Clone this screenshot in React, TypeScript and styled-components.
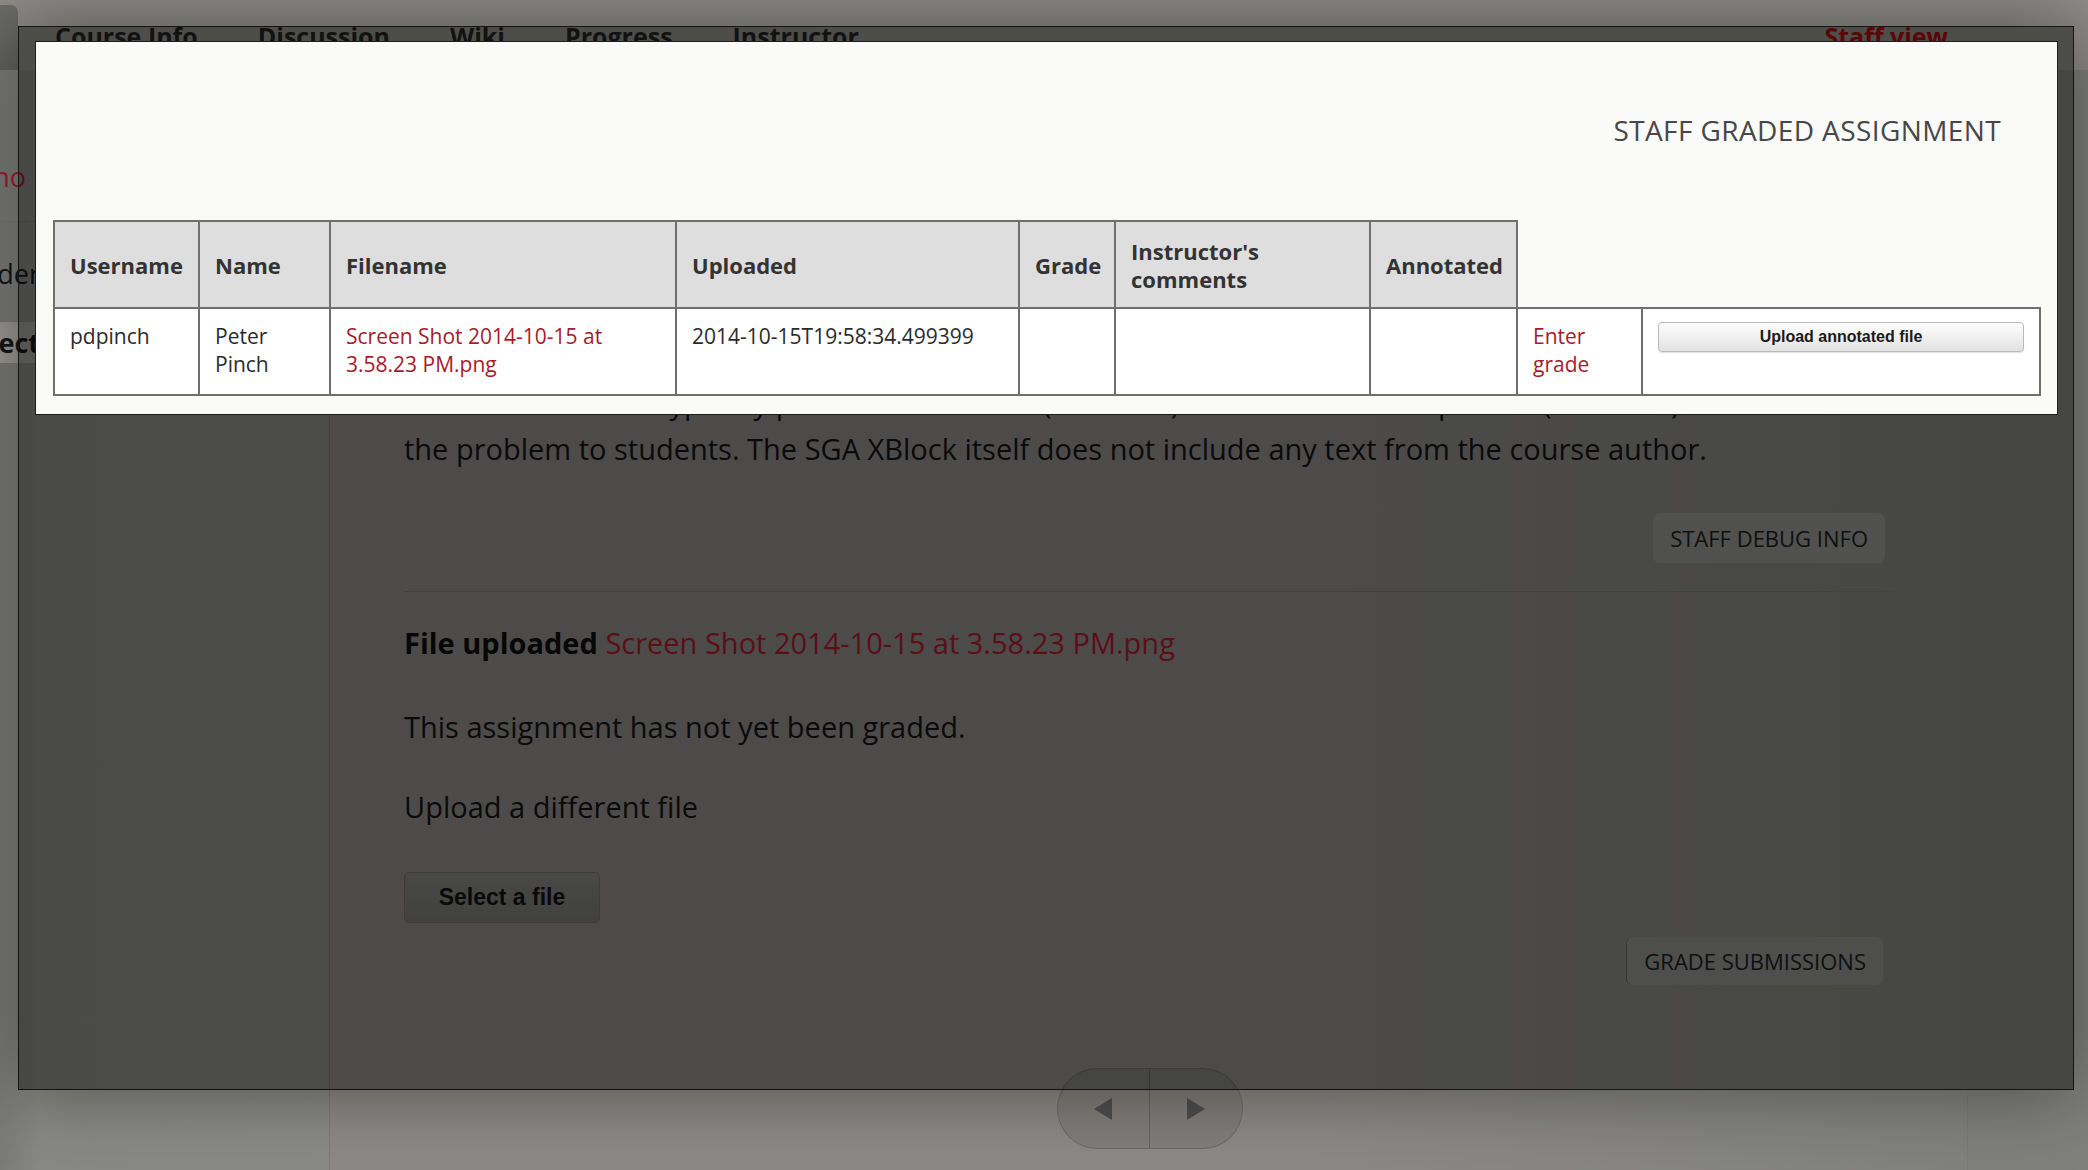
import React from "react";
import styled, { createGlobalStyle } from "styled-components";

const GlobalStyle = createGlobalStyle`
  html, body {
    margin: 0;
    padding: 0;
  }
  body {
    width: 2088px;
    height: 1170px;
    overflow: hidden;
    background: #8a8986;
    font-family: "Open Sans", "Liberation Sans", sans-serif;
  }
  * {
    box-sizing: border-box;
  }
`;

const linkRed = "#a61b2b";

/* ---------- page behind the modal ---------- */

const Page = styled.div`
  position: relative;
  width: 2088px;
  height: 1170px;
  overflow: hidden;
  display: flex;
  flex-direction: column;
  background: linear-gradient(180deg, #8d8c88 0%, #888783 60%, #8e8e8c 100%);
`;

const TabBar = styled.nav`
  display: flex;
  align-items: stretch;
  height: 65px;
  margin-top: 5px;
  flex: none;
`;

const ActiveTab = styled.div`
  width: 18px;
  margin-right: 7px;
  background: linear-gradient(180deg, #6c6c6a, #626260);
  border-radius: 0 7px 0 0;
`;

const Tab = styled.a<{ $staff?: boolean }>`
  padding: 14px 30px 0;
  font-size: 25px;
  font-weight: 700;
  line-height: 34px;
  color: ${(p) => (p.$staff ? "#a40c0c" : "#222")};
  text-decoration: none;
  ${(p) => (p.$staff ? "margin-left: auto; margin-right: 110px;" : "")}
`;

const Main = styled.div`
  flex: 1;
  display: grid;
  grid-template-columns: 329px 1638px 1fr;
`;

const Sidebar = styled.aside`
  padding-top: 81px;
  background: linear-gradient(90deg, #7a7a78 0px, #888885 40px, #898985 100%);
  font-size: 27px;
  color: #222;
`;

const SidebarRow = styled.div<{ $active?: boolean; $h: number }>`
  height: ${(p) => p.$h}px;
  display: flex;
  align-items: center;
  background: ${(p) => (p.$active ? "#9c9b97" : "transparent")};
  font-weight: ${(p) => (p.$active ? 700 : 400)};
`;

const SidebarLabel = styled.span<{ $w: number; $link?: boolean }>`
  width: ${(p) => p.$w}px;
  display: flex;
  justify-content: flex-end;
  overflow: hidden;
  white-space: nowrap;
  color: ${(p) => (p.$link ? linkRed : "#151515")};
`;

const SidebarRule = styled.div`
  height: 1px;
  margin: 20px 0 28px;
  background: #787874;
`;

const Content = styled.section`
  padding: 310px 72px 0 74px;
  border-left: 1px solid #7b7b78;
  background: linear-gradient(90deg, #8a8986 0%, #8a8986 60%, #81817d 100%);
  display: flex;
  flex-direction: column;
  color: #131313;
`;

const Para = styled.p<{ $gap?: number }>`
  margin: ${(p) => p.$gap ?? 0}px 0 0;
  font-size: 29px;
  line-height: 46px;
  white-space: nowrap;
`;

const Strong = styled.strong`
  font-weight: 700;
  color: #0e0e0e;
`;

const PageLink = styled.a`
  color: ${linkRed};
  text-decoration: none;
`;

const RightRow = styled.div<{ $gap: number; $inset: number }>`
  display: flex;
  justify-content: flex-end;
  margin-top: ${(p) => p.$gap}px;
  padding-right: ${(p) => p.$inset}px;
`;

const GhostButton = styled.button<{ $focus?: boolean }>`
  height: ${(p) => (p.$focus ? 48 : 50)}px;
  padding: 0 17px;
  border: none;
  ${(p) => (p.$focus ? "border-left: 1px dotted #3a3a3a;" : "")}
  border-radius: 7px;
  background: ${(p) => (p.$focus ? "#8e8e8b" : "#93928f")};
  font-family: "Open Sans", "Liberation Sans", sans-serif;
  font-size: 22px;
  color: #1c1c1c;
  text-transform: uppercase;
`;

const Divider = styled.hr`
  width: 100%;
  margin: 28px 0 0;
  border: none;
  border-top: 1px solid #777774;
`;

const SelectButton = styled.button`
  align-self: flex-start;
  margin-top: 42px;
  width: 196px;
  height: 51px;
  border: 1px solid #6e6e6c;
  border-radius: 5px;
  background: linear-gradient(180deg, #848482, #767674);
  font-family: "Liberation Sans", Arial, sans-serif;
  font-weight: 700;
  font-size: 23px;
  color: #111;
`;

const Pager = styled.div`
  align-self: center;
  margin-top: 83px;
  display: flex;
  height: 81px;
  border: 1px solid rgba(0, 0, 0, 0.16);
  border-radius: 41px;
  background: rgba(0, 0, 0, 0.08);
  overflow: hidden;
`;

const PagerHalf = styled.button<{ $first?: boolean }>`
  width: 92px;
  height: 100%;
  border: none;
  ${(p) => (p.$first ? "border-right: 1px solid rgba(0,0,0,0.22);" : "")}
  background: transparent;
  display: flex;
  align-items: center;
  justify-content: center;
  padding: 0;
`;

const RightBand = styled.div`
  border-left: 1px solid #7a7a77;
  background: #7f7f7b;
`;

/* ---------- overlay + modal ---------- */

const Overlay = styled.div`
  position: absolute;
  left: 18px;
  top: 26px;
  width: 2056px;
  height: 1064px;
  background: rgba(0, 0, 0, 0.45);
  border: 1px solid #141414;
  box-shadow: 0 0 70px rgba(0, 0, 0, 0.42);
`;

const Modal = styled.div`
  position: absolute;
  left: 35px;
  top: 41px;
  width: 2023px;
  padding: 0 17px 18px;
  background: #fafaf8;
  border: 1px solid #1c1c1c;
`;

const ModalTitle = styled.h1`
  margin: 70px 0 0;
  padding-right: 39px;
  text-align: right;
  font-size: 28px;
  line-height: 36px;
  font-weight: 400;
  letter-spacing: 0.4px;
  color: #474747;
`;

const Grid = styled.table`
  margin-top: 72px;
  width: 1986px;
  table-layout: fixed;
  border-collapse: collapse;
  font-size: 21px;
  line-height: 28px;
`;

const Col = styled.col<{ $w: number }>`
  width: ${(p) => p.$w}px;
`;

const Th = styled.th`
  padding: 15px 15px 14px;
  border: 2px solid #6f6f6f;
  background: #dedede;
  text-align: left;
  vertical-align: middle;
  font-size: 22px;
  font-weight: 700;
  color: #333;
`;

const Td = styled.td<{ $nowrap?: boolean }>`
  padding: 13px 15px 16px;
  border: 2px solid #6f6f6f;
  background: #fff;
  vertical-align: top;
  color: #2b2b2b;
  ${(p) => (p.$nowrap ? "white-space: nowrap;" : "")}
`;

const CellLink = styled.a`
  color: ${linkRed};
  text-decoration: none;
`;

const AquaButton = styled.button`
  display: block;
  width: 100%;
  height: 30px;
  border: 1px solid #b9b9b9;
  border-radius: 4px;
  background: linear-gradient(180deg, #fdfdfd 0%, #f1f0f0 50%, #e3e2e2 100%);
  box-shadow: 0 1px 1px rgba(0, 0, 0, 0.12);
  font-family: "Liberation Sans", Arial, sans-serif;
  font-weight: 700;
  font-size: 16px;
  color: #1b1b1b;
`;

const Triangle: React.FC<{ dir: "left" | "right" }> = ({ dir }) => (
  <svg width="18" height="22" viewBox="0 0 18 22">
    <polygon
      points={dir === "left" ? "18,0 18,22 0,11" : "0,0 0,22 18,11"}
      fill="#4e4e4e"
    />
  </svg>
);

const columns = [145, 131, 346, 343, 96, 255, 147, 125, 398];

export default function App() {
  return (
    <>
      <GlobalStyle />
      <Page>
        <TabBar>
          <ActiveTab />
          <Tab>Course Info</Tab>
          <Tab>Discussion</Tab>
          <Tab>Wiki</Tab>
          <Tab>Progress</Tab>
          <Tab>Instructor</Tab>
          <Tab $staff>Staff view</Tab>
        </TabBar>

        <Main>
          <Sidebar>
            <SidebarRow $h={50}>
              <SidebarLabel $w={26} $link>
                Chapter Uno
              </SidebarLabel>
            </SidebarRow>
            <SidebarRule />
            <SidebarRow $h={46}>
              <SidebarLabel $w={40}>Submission Folder</SidebarLabel>
            </SidebarRow>
            <SidebarRow $h={41} $active style={{ marginTop: 26 }}>
              <SidebarLabel $w={40}>Final Project</SidebarLabel>
            </SidebarRow>
          </Sidebar>

          <Content>
            <Para>
              The course author typically precedes this block (in Studio) with an HTML component (XModule) to describe
              <br />
              the problem to students. The SGA XBlock itself does not include any text from the course author.
            </Para>

            <RightRow $gap={41} $inset={10}>
              <GhostButton>Staff Debug Info</GhostButton>
            </RightRow>

            <Divider />

            <Para $gap={28}>
              <Strong>File uploaded</Strong>{" "}
              <PageLink>Screen Shot 2014-10-15 at 3.58.23 PM.png</PageLink>
            </Para>
            <Para $gap={38}>This assignment has not yet been graded.</Para>
            <Para $gap={34}>Upload a different file</Para>

            <SelectButton>Select a file</SelectButton>

            <RightRow $gap={14} $inset={12}>
              <GhostButton $focus>Grade Submissions</GhostButton>
            </RightRow>

            <Pager>
              <PagerHalf $first>
                <Triangle dir="left" />
              </PagerHalf>
              <PagerHalf>
                <Triangle dir="right" />
              </PagerHalf>
            </Pager>
          </Content>

          <RightBand />
        </Main>

        <Overlay />

        <Modal>
          <ModalTitle>STAFF GRADED ASSIGNMENT</ModalTitle>
          <Grid>
            <colgroup>
              {columns.map((w, i) => (
                <Col key={i} $w={w} />
              ))}
            </colgroup>
            <thead>
              <tr>
                <Th>Username</Th>
                <Th>Name</Th>
                <Th>Filename</Th>
                <Th>Uploaded</Th>
                <Th>Grade</Th>
                <Th>Instructor's comments</Th>
                <Th>Annotated</Th>
              </tr>
            </thead>
            <tbody>
              <tr>
                <Td>pdpinch</Td>
                <Td>Peter Pinch</Td>
                <Td>
                  <CellLink>Screen Shot 2014-10-15 at 3.58.23 PM.png</CellLink>
                </Td>
                <Td $nowrap>2014-10-15T19:58:34.499399</Td>
                <Td />
                <Td />
                <Td />
                <Td>
                  <CellLink>Enter grade</CellLink>
                </Td>
                <Td>
                  <AquaButton>Upload annotated file</AquaButton>
                </Td>
              </tr>
            </tbody>
          </Grid>
        </Modal>
      </Page>
    </>
  );
}
